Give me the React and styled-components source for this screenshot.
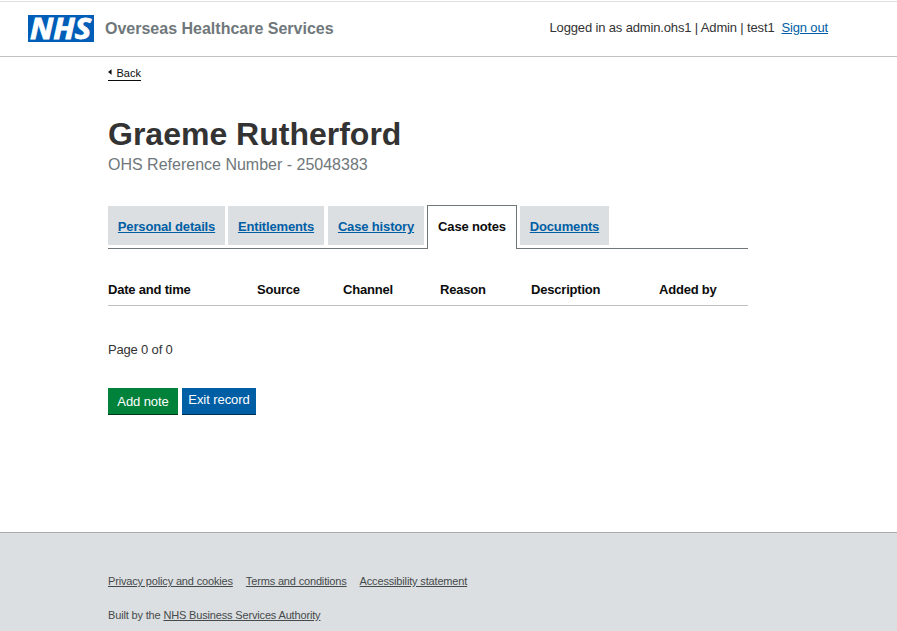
import React from 'react';
import styled, { createGlobalStyle } from 'styled-components';

const GlobalStyle = createGlobalStyle`
  *, *::before, *::after { box-sizing: border-box; }
  body {
    margin: 0;
    background: #fff;
    color: #333;
    font-family: "Liberation Sans", Arial, sans-serif;
    font-size: 13px;
    line-height: 16px;
  }
`;

const Page = styled.div`
  display: flex;
  flex-direction: column;
  height: 631px;
  overflow: hidden;
  padding-top: 1px;
`;

const Header = styled.header`
  display: flex;
  align-items: flex-start;
  flex: none;
  height: 56px;
  padding: 13px 69px 0 28px;
  border-top: 1px solid #dee0e2;
  border-bottom: 1px solid #bfc1c3;
`;

const Logo = styled.svg`
  display: block;
  flex: none;
  width: 66px;
  height: 27px;
  overflow: visible;
`;

const ServiceName = styled.span`
  margin: 4px auto 0 11px;
  color: #6f777b;
  font-size: 16px;
  font-weight: bold;
  line-height: 20px;
  white-space: nowrap;
`;

const Session = styled.div`
  margin-top: 5px;
  letter-spacing: -0.15px;
  white-space: nowrap;
`;

const SignOut = styled.a`
  margin-left: 7px;
  color: #005ea5;
  text-decoration: underline;
`;

const Main = styled.main`
  flex: none;
  width: 640px;
  height: 475px;
  margin-left: 108px;
`;

const BackLink = styled.a`
  display: flex;
  align-items: center;
  width: 33px;
  height: 15px;
  margin-top: 9px;
  border-bottom: 1px solid #0b0c0c;
  color: #0b0c0c;
  font-size: 11px;
  line-height: 14px;
`;

const BackArrow = styled.svg`
  width: 4px;
  height: 6px;
  margin: 0 5px 2px 0;
`;

const Name = styled.h1`
  margin: 34px 0 0;
  font-size: 32px;
  line-height: 38px;
  white-space: nowrap;
`;

const Reference = styled.p`
  margin: 2px 0 0;
  color: #6f777b;
  font-size: 16px;
  line-height: 20px;
`;

const Tabs = styled.nav`
  display: flex;
  align-items: flex-start;
  height: 44px;
  margin-top: 30px;
  border-bottom: 1px solid #6f777b;
`;

const Tab = styled.a`
  flex: none;
  width: ${(p) => p.$width}px;
  height: ${(p) => (p.$active ? 44 : 39)}px;
  margin: ${(p) => (p.$active ? 0 : 1)}px ${(p) => p.$gap}px 0 0;
  padding-top: 13px;
  border: ${(p) => (p.$active ? '1px solid #6f777b' : '0')};
  border-bottom: 0;
  background: ${(p) => (p.$active ? '#fff' : '#dcdfe1')};
  color: ${(p) => (p.$active ? '#0b0c0c' : '#005ea5')};
  font-weight: bold;
  letter-spacing: -0.15px;
  text-align: center;
  text-decoration: ${(p) => (p.$active ? 'none' : 'underline')};
  white-space: nowrap;
`;

const Notes = styled.table`
  width: 640px;
  margin-top: 27px;
  border-collapse: collapse;
  table-layout: fixed;
`;

const Heading = styled.th`
  width: ${(p) => p.$width}px;
  height: 29px;
  padding: 0;
  border-bottom: 1px solid #bfc1c3;
  color: #0b0c0c;
  letter-spacing: -0.2px;
  text-align: left;
  white-space: nowrap;
`;

const PageCount = styled.p`
  margin: 36px 0 0;
  letter-spacing: -0.17px;
`;

const Actions = styled.div`
  display: flex;
  gap: 4px;
  margin-top: 30px;
`;

const Button = styled.button`
  width: ${(p) => p.$width}px;
  height: 27px;
  padding: ${(p) => p.$top}px 0 0;
  border: 0;
  border-bottom: 1px solid ${(p) => p.$edge};
  background: ${(p) => p.$color};
  color: #fff;
  display: flex;
  justify-content: center;
  font: 13px/16px "Liberation Sans", Arial, sans-serif;
  letter-spacing: -0.08px;
  white-space: nowrap;
`;

const Footer = styled.footer`
  flex: 1;
  padding: 41px 0 0 108px;
  border-top: 1px solid #a9acae;
  background: #dcdfe1;
  color: #454a4c;
  font-size: 11px;
  letter-spacing: -0.16px;
  line-height: 14px;
`;

const FooterLinks = styled.div`
  display: flex;
  gap: 13px;
  margin-bottom: 20px;
`;

const FooterLink = styled.a`
  color: #454a4c;
  text-decoration: underline;
  white-space: nowrap;
`;

const TABS = [
  { label: 'Personal details', width: 117, gap: 3 },
  { label: 'Entitlements', width: 96, gap: 4 },
  { label: 'Case history', width: 96, gap: 3 },
  { label: 'Case notes', width: 90, gap: 3, active: true },
  { label: 'Documents', width: 89, gap: 0 },
];

const COLUMNS = [
  ['Date and time', 149],
  ['Source', 86],
  ['Channel', 97],
  ['Reason', 91],
  ['Description', 128],
  ['Added by', 89],
];

export default function App() {
  return (
    <Page>
      <GlobalStyle />
      <Header>
        <Logo viewBox="0 0 66 27" role="img" aria-label="NHS">
          <rect width="66" height="27" fill="#005eb8" />
          <text
            x="2"
            y="24"
            textLength="61"
            lengthAdjust="spacingAndGlyphs"
            fill="#fff"
            stroke="#fff"
            strokeWidth="0.9"
            fontFamily="'Open Sans', sans-serif"
            fontSize="28.5"
            fontWeight="700"
            fontStyle="italic"
          >
            NHS
          </text>
        </Logo>
        <ServiceName>Overseas Healthcare Services</ServiceName>
        <Session>
          Logged in as admin.ohs1 | Admin | test1
          <SignOut>Sign out</SignOut>
        </Session>
      </Header>
      <Main>
        <BackLink>
          <BackArrow viewBox="0 0 4 6">
            <path d="M4 0v6L0 3z" fill="#0b0c0c" />
          </BackArrow>
          Back
        </BackLink>
        <Name>Graeme Rutherford</Name>
        <Reference>OHS Reference Number - 25048383</Reference>
        <Tabs>
          {TABS.map((t) => (
            <Tab key={t.label} $width={t.width} $gap={t.gap} $active={t.active}>
              {t.label}
            </Tab>
          ))}
        </Tabs>
        <Notes>
          <thead>
            <tr>
              {COLUMNS.map(([label, width]) => (
                <Heading key={label} $width={width}>{label}</Heading>
              ))}
            </tr>
          </thead>
        </Notes>
        <PageCount>Page 0 of 0</PageCount>
        <Actions>
          <Button $width={70} $top={6} $color="#00823b" $edge="#003618">Add note</Button>
          <Button $width={74} $top={4} $color="#005ea5" $edge="#002f53">Exit record</Button>
        </Actions>
      </Main>
      <Footer>
        <FooterLinks>
          <FooterLink>Privacy policy and cookies</FooterLink>
          <FooterLink>Terms and conditions</FooterLink>
          <FooterLink>Accessibility statement</FooterLink>
        </FooterLinks>
        Built by the <FooterLink>NHS Business Services Authority</FooterLink>
      </Footer>
    </Page>
  );
}
